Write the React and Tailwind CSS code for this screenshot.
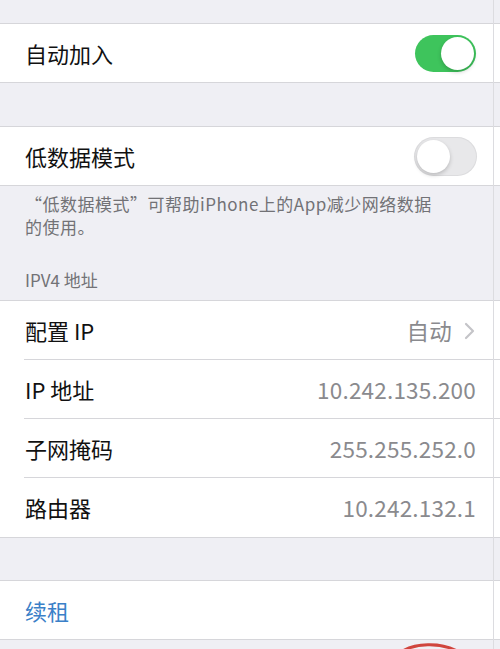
import React from "react";

const font = { fontFamily: '"Noto Sans CJK SC", "Noto Sans", sans-serif' };

function Toggle({ on }) {
    return (
        <div
            className={`relative h-[37px] w-[61px] rounded-full ${on ? "bg-[#3ec45c]" : "bg-[#e8e8ea] ring-1 ring-[#dcdcde]"}`}
        >
            <div
                className={`absolute top-[2px] h-[33px] w-[33px] rounded-full bg-white shadow-[0_2px_4px_rgba(0,0,0,0.2)] ${on ? "right-[2px]" : "left-[2px]"}`}
            />
        </div>
    );
}

function Row({ label, value, chevron, toggle, inset, blue, tall }) {
    return (
        <div className={`flex ${tall ? "h-[59px]" : "h-[58px]"} items-center pl-[25px] pr-[24px] relative`}>
            <div className={`flex-1 text-[22px] ${blue ? "text-[#3a80c8]" : "text-[#111]"}`}>{label}</div>
            {value && <div className="text-[22.5px] tracking-[0.2px] text-[#8a8a8e]">{value}</div>}
            {chevron && (
                <svg width="12" height="18" viewBox="0 0 12 18" className="ml-[12px]">
                    <path d="M2 2 L9 9 L2 16" fill="none" stroke="#c4c4c8" strokeWidth="2.2" strokeLinecap="round" strokeLinejoin="round" />
                </svg>
            )}
            {toggle !== undefined && <Toggle on={toggle} />}
            {inset && <div className="absolute bottom-0 left-[24px] right-0 h-px bg-[#d6d6da]" />}
        </div>
    );
}

export default function App() {
    return (
        <div className="relative h-[649px] w-[500px] overflow-hidden bg-[#efeff4]" style={font}>
            <div className="h-[23px]" />
            <section className="border-y border-[#d6d6da] bg-white">
                <Row label="自动加入" toggle={true} />
            </section>
            <div className="h-[43px]" />
            <section className="border-y border-[#d6d6da] bg-white">
                <Row label="低数据模式" toggle={false} />
            </section>
            <div className="pl-[25px] pt-[6px] text-[17px] leading-[23px] tracking-[0.5px] text-[#727276]">
                “低数据模式”可帮助iPhone上的App减少网络数据
                <br />
                的使用。
            </div>
            <div className="pl-[25px] pt-[30px] pb-[9px] text-[17px] leading-[23px] text-[#727276]">IPV4 地址</div>
            <section className="border-y border-[#d6d6da] bg-white">
                <Row label="配置 IP" value="自动" chevron inset tall />
                <Row label="IP 地址" value="10.242.135.200" inset tall />
                <Row label="子网掩码" value="255.255.252.0" inset tall />
                <Row label="路由器" value="10.242.132.1" tall />
            </section>
            <div className="h-[42px]" />
            <section className="border-y border-[#d6d6da] bg-white">
                <Row label="续租" blue />
            </section>
            <svg className="absolute left-[395px] top-[640px]" width="70" height="12" viewBox="0 0 70 12">
                <path d="M6 12 C20 3, 45 2, 62 11" fill="none" stroke="#d0453d" strokeWidth="3" strokeLinecap="round" />
            </svg>
            <div className="absolute right-[6px] top-0 bottom-0 w-px bg-[#dcdce0]" />
        </div>
    );
}
